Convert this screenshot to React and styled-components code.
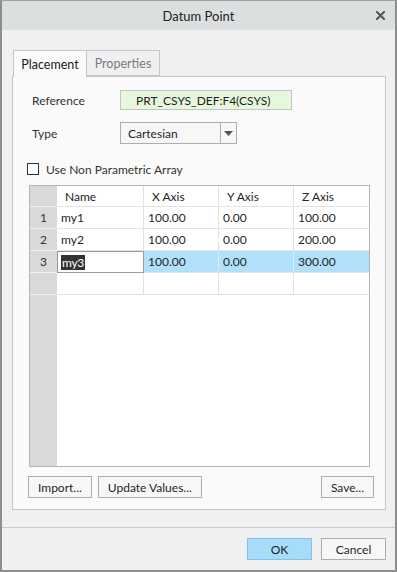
import React from 'react';
import styled, { createGlobalStyle } from 'styled-components';

const GlobalStyle = createGlobalStyle`
  html, body { margin: 0; padding: 0; background: #eef0f1; }
  * { box-sizing: border-box; }
`;

const rows = [
  { id: 1, name: 'my1', x: '100.00', y: '0.00', z: '100.00' },
  { id: 2, name: 'my2', x: '100.00', y: '0.00', z: '200.00' },
  { id: 3, name: 'my3', x: '100.00', y: '0.00', z: '300.00', active: true },
];

const App = () => {
  return (
    <>
      <GlobalStyle />
      <Window>
        <TitleBar>
          <span>Datum Point</span>
          <Close>
            <svg width="9" height="9" viewBox="0 0 9 9">
              <path d="M1 1 L8 8 M8 1 L1 8" stroke="#555" strokeWidth="2" strokeLinecap="square" />
            </svg>
          </Close>
        </TitleBar>
        <Body>
          <Tabs>
            <Tab $active>Placement</Tab>
            <Tab>Properties</Tab>
          </Tabs>
          <Panel>
            <FormRow>
              <Label>Reference</Label>
              <RefField>PRT_CSYS_DEF:F4(CSYS)</RefField>
            </FormRow>
            <FormRow $gap={12}>
              <Label>Type</Label>
              <Select>
                <SelectValue>Cartesian</SelectValue>
                <SelectArrow>
                  <svg width="9" height="5" viewBox="0 0 9 5">
                    <path d="M0 0 H9 L4.5 5 Z" fill="#555" />
                  </svg>
                </SelectArrow>
              </Select>
            </FormRow>
            <CheckRow>
              <Box />
              <span>Use Non Parametric Array</span>
            </CheckRow>
            <Table>
              <Corner />
              <HeadCell>Name</HeadCell>
              <HeadCell>X Axis</HeadCell>
              <HeadCell>Y Axis</HeadCell>
              <HeadCell $last>Z Axis</HeadCell>
              {rows.map((r) => (
                <React.Fragment key={r.id}>
                  <RowNum>{r.id}</RowNum>
                  {r.active ? (
                    <EditCell>
                      <Selected>{r.name}</Selected>
                    </EditCell>
                  ) : (
                    <Cell>{r.name}</Cell>
                  )}
                  <Cell $hl={r.active}>{r.x}</Cell>
                  <Cell $hl={r.active}>{r.y}</Cell>
                  <Cell $hl={r.active} $last>{r.z}</Cell>
                </React.Fragment>
              ))}
              <RowNum />
              <Cell />
              <Cell />
              <Cell />
              <Cell $last />
              <Gutter />
              <Filler />
            </Table>
            <ButtonRow>
              <Button>Import...</Button>
              <Button>Update Values...</Button>
              <Spacer />
              <Button>Save...</Button>
            </ButtonRow>
          </Panel>
        </Body>
        <Footer>
          <Button $primary $w={65}>OK</Button>
          <Button $w={65}>Cancel</Button>
        </Footer>
      </Window>
    </>
  );
};

const Window = styled.div`
  width: 397px;
  height: 572px;
  display: flex;
  flex-direction: column;
  background: #eef0f1;
  border: 1px solid #a0a0a0;
  border-left: 2px solid #8e8e8e;
  border-right: 2px solid #8e8e8e;
  border-bottom: 2px solid #8e8e8e;
  font-family: Lato, 'Noto Sans', sans-serif;
  font-size: 12px;
  color: #1f1f1f;
`;

const TitleBar = styled.div`
  position: relative;
  height: 29px;
  flex: none;
  display: flex;
  align-items: center;
  justify-content: center;
  background: #dcdfe0;
  font-size: 13px;
  color: #222;
`;

const Close = styled.span`
  position: absolute;
  right: 10px;
  top: 10px;
  display: flex;
`;

const Body = styled.div`
  padding: 20px 9px 0 10px;
  display: flex;
  flex-direction: column;
`;

const Tabs = styled.div`
  display: flex;
  height: 26px;
  align-items: flex-end;
  padding-left: 1px;
`;

const Tab = styled.div`
  height: ${(p) => (p.$active ? '27px' : '26px')};
  margin-bottom: ${(p) => (p.$active ? '-1px' : '0')};
  width: ${(p) => (p.$active ? '74px' : '73px')};
  display: flex;
  align-items: center;
  justify-content: center;
  font-size: 12.5px;
  border: 1px solid #c6c6c6;
  border-bottom: ${(p) => (p.$active ? 'none' : '1px solid #c6c6c6')};
  border-left: ${(p) => (p.$active ? '1px solid #c6c6c6' : 'none')};
  background: ${(p) => (p.$active ? '#fafafa' : '#eef0f1')};
  color: ${(p) => (p.$active ? '#1a1a1a' : '#7a7a7a')};
  position: relative;
  z-index: ${(p) => (p.$active ? 1 : 0)};
`;

const Panel = styled.div`
  height: 434px;
  background: #fafafa;
  border: 1px solid #c6c6c6;
  padding: 13px 15px 0 16px;
  display: flex;
  flex-direction: column;
`;

const FormRow = styled.div`
  display: flex;
  align-items: center;
  margin-top: ${(p) => p.$gap || 0}px;
`;

const Label = styled.div`
  width: 91px;
  padding-left: 3px;
  color: #333;
`;

const RefField = styled.div`
  width: 172px;
  height: 20px;
  background: #e5f8dd;
  border: 1px solid #c4c4c4;
  padding-left: 15px;
  display: flex;
  align-items: center;
  color: #1f1f1f;
`;

const Select = styled.div`
  width: 117px;
  height: 22px;
  display: flex;
  border: 1px solid #adadad;
  background: #f7f7f7;
`;

const SelectValue = styled.div`
  flex: 1;
  padding-left: 7px;
  display: flex;
  align-items: center;
  border-right: 1px solid #adadad;
`;

const SelectArrow = styled.div`
  width: 15px;
  display: flex;
  align-items: center;
  justify-content: center;
`;

const CheckRow = styled.div`
  display: flex;
  align-items: center;
  gap: 7px;
  margin-top: 18px;
  height: 14px;
  color: #333;
`;

const Box = styled.div`
  width: 12px;
  height: 12px;
  border: 1px solid #333;
  background: #fff;
  margin-left: -2px;
`;

const Table = styled.div`
  margin-top: 9px;
  width: 341px;
  height: 282px;
  border: 1px solid #b4b4b4;
  background: #fff;
  display: grid;
  grid-template-columns: 27px 87px 75px 75px 1fr;
  grid-template-rows: 21px 22px 22px 22px 22px 1fr;
`;

const Corner = styled.div`
  background: #d9d9d9;
  border-bottom: 1px solid #f0f0f0;
`;

const HeadCell = styled.div`
  padding-left: 8px;
  display: flex;
  align-items: center;
  border-right: ${(p) => (p.$last ? 'none' : '1px solid #e3e3e3')};
  border-bottom: 1px solid #e3e3e3;
  color: #2a2020;
`;

const RowNum = styled.div`
  background: #d9d9d9;
  border-bottom: 1px solid #f0f0f0;
  display: flex;
  align-items: center;
  justify-content: center;
  color: #333;
`;

const Cell = styled.div`
  padding-left: 4px;
  display: flex;
  align-items: center;
  background: ${(p) => (p.$hl ? '#b1e0fa' : '#fff')};
  border-right: ${(p) => (p.$last ? 'none' : `1px solid ${p.$hl ? '#d8eef9' : '#e3e3e3'}`)};
  border-bottom: 1px solid #e3e3e3;
  color: #1f1f1f;
`;

const EditCell = styled.div`
  padding-left: 3px;
  display: flex;
  align-items: center;
  border: 1px solid #9a9a9a;
  background: #fff;
`;

const Selected = styled.span`
  background: #333;
  color: #fff;
  line-height: 15px;
  padding: 0 1px;
  letter-spacing: -0.3px;
`;

const Gutter = styled.div`
  background: #d9d9d9;
`;

const Filler = styled.div`
  grid-column: 2 / span 4;
  background: #fff;
`;

const ButtonRow = styled.div`
  display: flex;
  gap: 6px;
  margin: 9px -4px 0 -1px;
`;

const Spacer = styled.div`
  flex: 1;
`;

const Button = styled.div`
  height: 22px;
  min-width: ${(p) => p.$w || 0}px;
  padding: 0 9px;
  display: flex;
  align-items: center;
  justify-content: center;
  border: 1px solid ${(p) => (p.$primary ? '#7ec4ec' : '#adadad')};
  background: ${(p) => (p.$primary ? '#a6dcf8' : '#f7f7f7')};
  color: #1f1f1f;
`;

const Footer = styled.div`
  margin-top: 17px;
  border-top: 1px solid #cacaca;
  padding: 10px 9px 0 0;
  display: flex;
  justify-content: flex-end;
  gap: 9px;
`;

export default App;
